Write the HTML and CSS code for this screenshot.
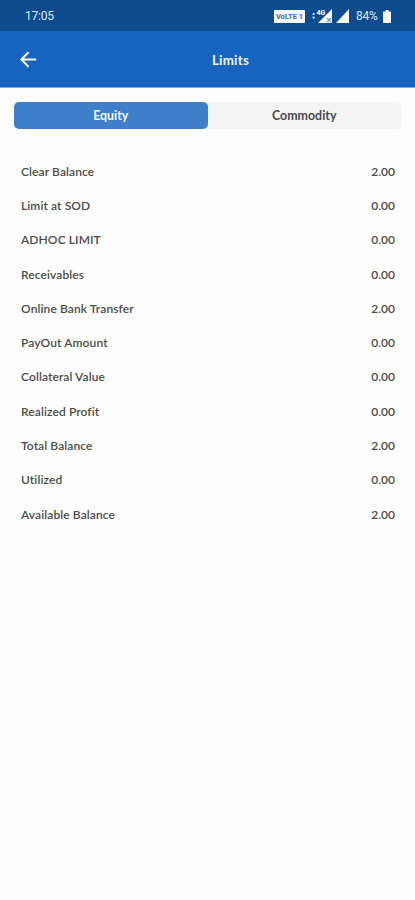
FILE: index.html
```
<!DOCTYPE html>
<html lang="en">
<head>
  <meta charset="UTF-8">
  <meta name="viewport" content="width=device-width, initial-scale=1.0">
  <title>Limits</title>
  <link rel="stylesheet" href="styles.css">
</head>
<body>
  <!-- Status bar -->
  <div class="status-bar">
    <span class="time">17:05</span>
    <div class="status-icons">
      <span class="volte">VoLTE 1</span>
      <svg class="signal-4g" width="22" height="16" viewBox="0 0 22 16">
        <path d="M1 6.8L2.6 4.4L4.2 6.8ZM1 8.8L2.6 11.2L4.2 8.8Z" fill="#dce8f5"/>
        <path d="M21 1V15H7Z" fill="#fff"/>
        <path d="M5 1H14V8H5Z" fill="#0f4c8f"/>
        <text x="5.5" y="7" class="tiny">4G</text>
        <path d="M16 10L20 14M20 10L16 14" stroke="#6f97c4" stroke-width="1.2"/>
      </svg>
      <svg class="signal" width="13" height="14" viewBox="0 0 13 14">
        <path d="M13 0V14H0Z" fill="#fff"/>
      </svg>
      <span class="percent">84%</span>
      <svg class="battery" width="8" height="13" viewBox="0 0 8 13">
        <path d="M2.5 0H5.5V1.5H7.5Q8 1.5 8 2V12.3Q8 13 7.3 13H.7Q0 13 0 12.3V2Q0 1.5 .5 1.5H2.5Z" fill="#fff"/>
      </svg>
    </div>
  </div>

  <!-- Header -->
  <header class="header">
    <svg class="back" width="17" height="17" viewBox="0 0 17 17">
      <path d="M16.2 8.5H1.5M8.5 1.3L1.3 8.5L8.5 15.7" fill="none" stroke="#fff" stroke-width="2"/>
    </svg>
    <h1>Limits</h1>
  </header>

  <!-- Tabs -->
  <div class="tabs">
    <button class="tab active">Equity</button>
    <button class="tab">Commodity</button>
  </div>

  <!-- Limits list -->
  <div class="limits">
    <div class="row"><span>Clear Balance</span><span class="value">2.00</span></div>
    <div class="row"><span>Limit at SOD</span><span class="value">0.00</span></div>
    <div class="row"><span>ADHOC LIMIT</span><span class="value">0.00</span></div>
    <div class="row"><span>Receivables</span><span class="value">0.00</span></div>
    <div class="row"><span>Online Bank Transfer</span><span class="value">2.00</span></div>
    <div class="row"><span>PayOut Amount</span><span class="value">0.00</span></div>
    <div class="row"><span>Collateral Value</span><span class="value">0.00</span></div>
    <div class="row"><span>Realized Profit</span><span class="value">0.00</span></div>
    <div class="row"><span>Total Balance</span><span class="value">2.00</span></div>
    <div class="row"><span>Utilized</span><span class="value">0.00</span></div>
    <div class="row"><span>Available Balance</span><span class="value">2.00</span></div>
  </div>
</body>
</html>
```
FILE: styles.css
```
* {
  box-sizing: border-box;
}
body {
  margin: 0;
  min-height: 900px;
  background: #fefefe;
  font-family: Lato, sans-serif;
  color: #4a4a4a;
}
.status-bar {
  display: flex;
  justify-content: space-between;
  align-items: center;
  height: 31px;
  padding: 1px 24px 0 25px;
  background: #0f4c8f;
  color: #dce8f5;
  font-family: Roboto, sans-serif;
  font-size: 12px;
}
.time {
  letter-spacing: -0.2px;
}
.status-icons {
  display: flex;
  align-items: center;
}
.volte {
  width: 31px;
  height: 13px;
  border-radius: 1px;
  background: #f4f8fc;
  color: #3b6ba3;
  font-size: 7.5px;
  font-weight: 700;
  line-height: 13px;
  text-align: center;
  white-space: nowrap;
}
.signal-4g {
  margin-left: 6px;
}
.tiny {
  fill: #fff;
  font-size: 7px;
  font-weight: 700;
}
.signal {
  margin-left: 3px;
}
.percent {
  margin-left: 7px;
  width: 23px;
  white-space: nowrap;
  letter-spacing: -0.2px;
}
.battery {
  margin-left: 4px;
}
.header {
  display: grid;
  grid-template-columns: 46px 1fr;
  align-items: center;
  height: 57px;
  padding-left: 20px;
  border-bottom: 1px solid #82aadf;
  background: #1664c0;
}
.header h1 {
  margin: 0;
  padding: 1px 20px 0 0;
  color: #f2f7fd;
  font-size: 13.3px;
  font-weight: 700;
  letter-spacing: 0.25px;
  text-align: center;
}
.tabs {
  display: flex;
  height: 27px;
  margin: 14px 14px 0;
  border-radius: 5px;
  background: #f3f3f3;
}
.tab {
  flex: 1;
  padding: 0 0 1px;
  border: 0;
  border-radius: 5px;
  background: none;
  color: #4a4a4a;
  font-family: inherit;
  font-size: 12.4px;
  font-weight: 700;
}
.tab.active {
  background: #3e7fca;
  color: #f2f7fd;
}
.limits {
  padding: 25px 20px 0 21px;
}
.row {
  display: flex;
  justify-content: space-between;
  align-items: center;
  height: 34.3px;
  font-size: 12px;
  font-weight: 600;
  letter-spacing: 0.1px;
}
.value {
  letter-spacing: 0;
}
```
